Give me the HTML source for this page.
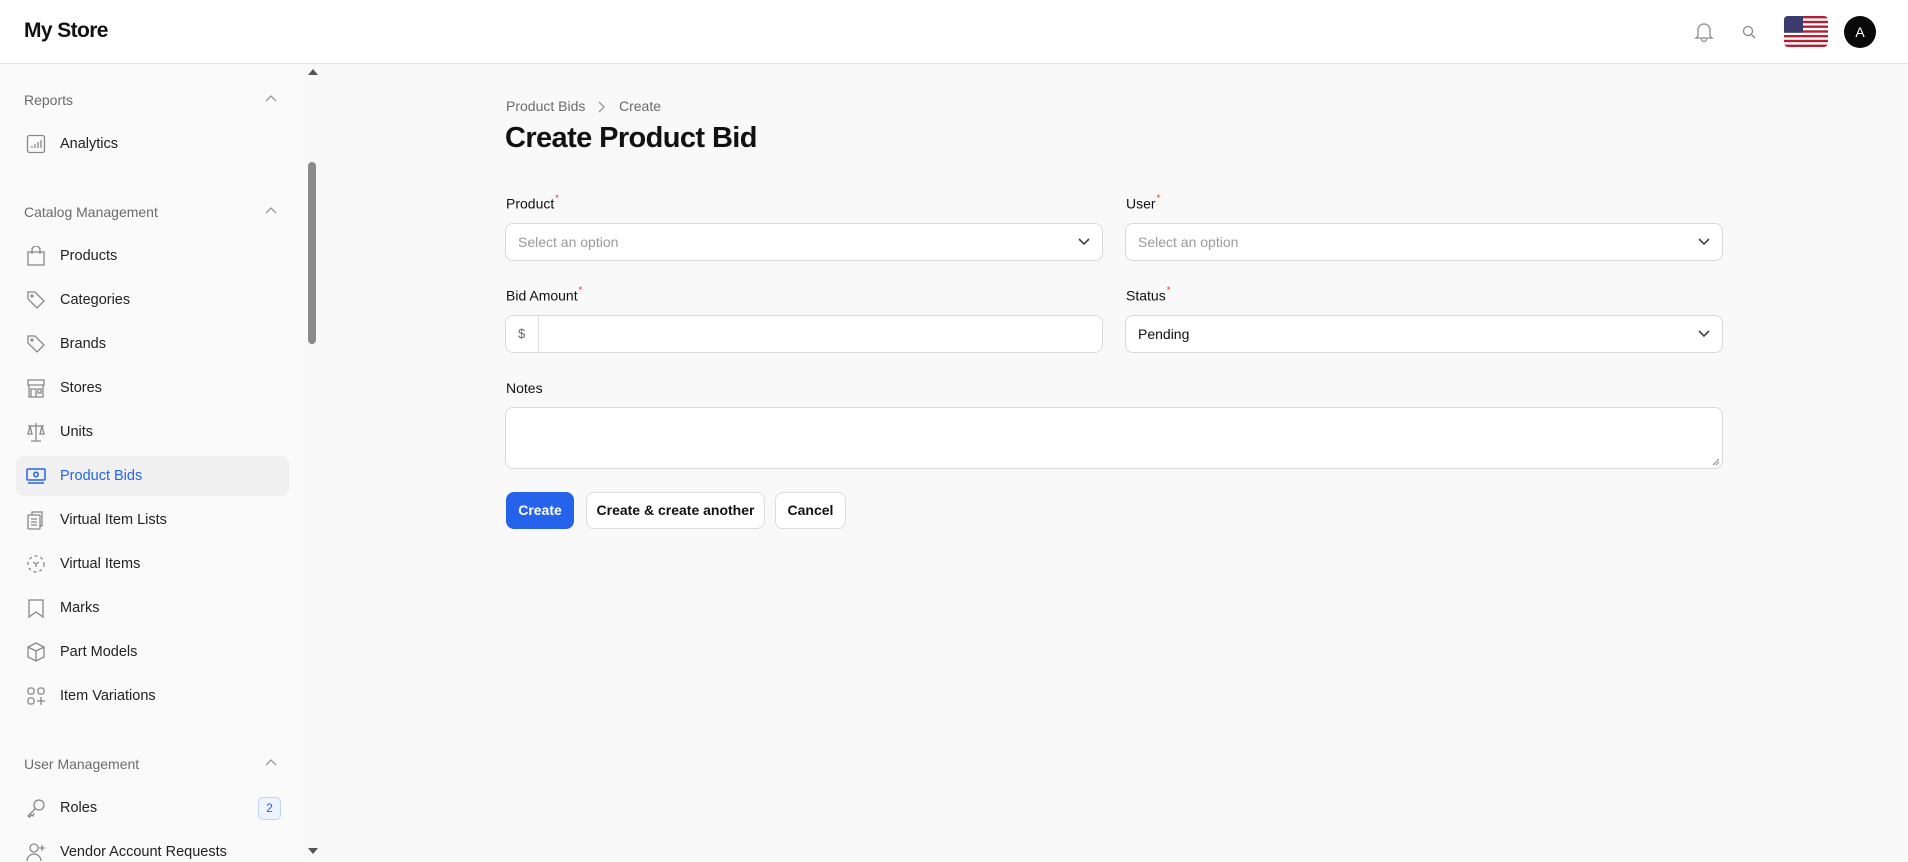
<!DOCTYPE html>
<html><head><meta charset="utf-8"><style>
*{box-sizing:border-box;margin:0;padding:0}
body{width:1908px;height:860px;overflow:hidden;background:#f9f9f9;font-family:"Liberation Sans",sans-serif;color:#111;position:relative}
.hdr{position:absolute;left:0;top:0;width:1908px;height:64px;background:#fff;border-bottom:1px solid #e5e5e5}
.logo{position:absolute;left:24px;top:19px;font-size:21px;font-weight:bold;letter-spacing:-0.6px}
.side{position:absolute;left:0;top:64px;width:305px;height:796px;background:#fafafa}
.track{position:absolute;left:305px;top:64px;width:15px;height:796px;background:#f9f9f9}
.thumb{position:absolute;left:308px;top:162px;width:8px;height:182px;background:#8a8a8a;border-radius:4px}
.grp{position:absolute;left:24px;font-size:14px;color:#6b6b6b}
.chev{position:absolute;left:264px;width:14px;height:14px}
.it{position:absolute;left:60px;font-size:14.5px;color:#222}
.ic{position:absolute;left:26px;width:20px;height:20px}
.main{position:absolute;left:506px}
.lbl{position:absolute;font-size:14px;color:#111}
.lbl sup{color:#e02424;font-size:9px;position:relative;top:-2px;margin-left:1px}
.box{position:absolute;background:#fff;border:1px solid #d9d9d9;border-radius:8px;font-size:14px}
.ph{position:absolute;left:12px;top:10px;color:#9a9a9a}
.dd{position:absolute;right:12px;top:13px}
.btn{position:absolute;top:492px;height:37px;border-radius:8px;font-size:14px;font-weight:bold;text-align:center;line-height:35px}
</style></head><body>
<div class="hdr">
<div class="logo">My Store</div>
<svg style="position:absolute;left:1694px;top:21px" width="20" height="22" viewBox="0 0 20 22" fill="none" stroke="#9a9a9a" stroke-width="1.5"><path d="M4 15V9a6 6 0 0 1 12 0v6l2 2H2z"/><path d="M7.5 18a2.5 2.5 0 0 0 5 0"/></svg>
<svg style="position:absolute;left:1742px;top:25px" width="14" height="14" viewBox="0 0 14 14" fill="none" stroke="#888" stroke-width="1.3"><circle cx="6" cy="6" r="4.5"/><path d="M9.5 9.5L13 13"/></svg>
<svg style="position:absolute;left:1784px;top:16px" width="44" height="31" viewBox="0 0 44 31"><defs><clipPath id="c"><rect width="44" height="31" rx="4"/></clipPath></defs><g clip-path="url(#c)"><rect width="44" height="31" fill="#fff"/><g fill="#b22234"><rect y="0" width="44" height="2.4"/><rect y="4.8" width="44" height="2.4"/><rect y="9.5" width="44" height="2.4"/><rect y="14.3" width="44" height="2.4"/><rect y="19" width="44" height="2.4"/><rect y="23.8" width="44" height="2.4"/><rect y="28.6" width="44" height="2.4"/></g><rect width="19" height="16.7" fill="#3c3b6e"/></g></svg>
<div style="position:absolute;left:1844px;top:16px;width:32px;height:32px;border-radius:50%;background:#0a0a0a;color:#fff;font-size:14px;text-align:center;line-height:32px">A</div>
</div>
<div class="side">
<div style="position:absolute;left:16px;top:392px;width:273px;height:40px;background:#f0f0f0;border-radius:8px"></div>
</div>
<div class="track"><svg style="position:absolute;left:3px;top:5px" width="10" height="6"><path d="M0 6L5 0L10 6z" fill="#555"/></svg><svg style="position:absolute;left:3px;top:784px" width="10" height="6"><path d="M0 0L5 6L10 0z" fill="#555"/></svg></div>
<div class="thumb"></div>

<div class="grp" style="top:92px">Reports</div>
<svg class="chev" style="top:92px" viewBox="0 0 14 14" fill="none" stroke="#999" stroke-width="1.3"><path d="M2 9l5-5 5 5"/></svg>
<svg class="ic" style="top:134px" viewBox="0 0 20 20" fill="none" stroke="#888" stroke-width="1.3"><rect x="1.5" y="1.5" width="17" height="17" rx="2"/><path d="M6 14v-2M9 14v-4M12 14v-6M15 14V6"/></svg>
<div class="it" style="top:136px">Analytics</div>

<div class="grp" style="top:204px">Catalog Management</div>
<svg class="chev" style="top:204px" viewBox="0 0 14 14" fill="none" stroke="#999" stroke-width="1.3"><path d="M2 9l5-5 5 5"/></svg>

<svg class="ic" style="top:246px" viewBox="0 0 20 20" fill="none" stroke="#888" stroke-width="1.3"><path d="M2 6h16v13H2z"/><path d="M6 8V4a4 4 0 0 1 8 0v4"/></svg>
<div class="it" style="top:248px">Products</div>
<svg class="ic" style="top:290px" viewBox="0 0 20 20" fill="none" stroke="#888" stroke-width="1.3"><path d="M2 2h7l9 9-7 7-9-9z"/><circle cx="6" cy="6" r="1"/></svg>
<div class="it" style="top:292px">Categories</div>
<svg class="ic" style="top:334px" viewBox="0 0 20 20" fill="none" stroke="#888" stroke-width="1.3"><path d="M2 2h7l9 9-7 7-9-9z"/><circle cx="6" cy="6" r="1"/></svg>
<div class="it" style="top:336px">Brands</div>
<svg class="ic" style="top:378px" viewBox="0 0 20 20" fill="none" stroke="#888" stroke-width="1.3"><path d="M2 2h16v5H2zM3 7v12h14V7M5 19v-8h5v8M12 11h3v4h-3z"/></svg>
<div class="it" style="top:380px">Stores</div>
<svg class="ic" style="top:422px" viewBox="0 0 20 20" fill="none" stroke="#888" stroke-width="1.3"><path d="M10 1v18M5 19h10M2 4h16M4 4l-2 8h4zM16 4l-2 8h4z"/></svg>
<div class="it" style="top:424px">Units</div>
<svg class="ic" style="top:466px" viewBox="0 0 20 20" fill="none" stroke="#2563eb" stroke-width="1.5"><rect x="1" y="3" width="18" height="11" rx="1"/><circle cx="10" cy="8.5" r="2.2"/><path d="M2 17h16"/></svg>
<div class="it" style="top:468px;color:#2563eb">Product Bids</div>
<svg class="ic" style="top:510px" viewBox="0 0 20 20" fill="none" stroke="#888" stroke-width="1.3"><rect x="2" y="5" width="12" height="14" rx="1"/><path d="M6 5V2h10v14h-2M5 9h6M5 12h6M5 15h6"/></svg>
<div class="it" style="top:512px">Virtual Item Lists</div>
<svg class="ic" style="top:554px" viewBox="0 0 20 20" fill="none" stroke="#888" stroke-width="1.3" stroke-dasharray="3 3"><circle cx="10" cy="10" r="8"/><path d="M7 8l3 2 3-2M10 10v3" stroke-dasharray="none"/></svg>
<div class="it" style="top:556px">Virtual Items</div>
<svg class="ic" style="top:598px" viewBox="0 0 20 20" fill="none" stroke="#888" stroke-width="1.3"><path d="M3 2h14v17l-7-5-7 5z"/></svg>
<div class="it" style="top:600px">Marks</div>
<svg class="ic" style="top:642px" viewBox="0 0 20 20" fill="none" stroke="#888" stroke-width="1.3"><path d="M10 1l8 4v10l-8 4-8-4V5zM2 5l8 4 8-4M10 9v10"/></svg>
<div class="it" style="top:644px">Part Models</div>
<svg class="ic" style="top:686px" viewBox="0 0 20 20" fill="none" stroke="#888" stroke-width="1.3"><rect x="2" y="2" width="6" height="6" rx="2"/><rect x="12" y="2" width="6" height="6" rx="2"/><rect x="2" y="12" width="6" height="6" rx="2"/><path d="M15 11v8M11 15h8"/></svg>
<div class="it" style="top:688px">Item Variations</div>

<div class="grp" style="top:756px">User Management</div>
<svg class="chev" style="top:756px" viewBox="0 0 14 14" fill="none" stroke="#999" stroke-width="1.3"><path d="M2 9l5-5 5 5"/></svg>
<svg class="ic" style="top:798px" viewBox="0 0 20 20" fill="none" stroke="#888" stroke-width="1.3"><circle cx="13" cy="7" r="5"/><path d="M9.5 10.5L2 18l2 1 1-2 2 1 1-3"/></svg>
<div class="it" style="top:800px">Roles</div>
<div style="position:absolute;left:258px;top:797px;width:23px;height:23px;border:1px solid #bfd4fb;background:#eef4ff;border-radius:5px;color:#2563eb;font-size:12px;text-align:center;line-height:21px">2</div>
<svg class="ic" style="top:842px" viewBox="0 0 20 20" fill="none" stroke="#888" stroke-width="1.3"><circle cx="8" cy="6" r="4"/><path d="M1 19a7 7 0 0 1 14 0M16 3v6M13 6h6"/></svg>
<div class="it" style="top:844px">Vendor Account Requests</div>

<div style="position:absolute;left:506px;top:98px;font-size:14px;color:#6b6b6b">Product Bids</div>
<svg style="position:absolute;left:596px;top:101px" width="10" height="12" viewBox="0 0 10 12" fill="none" stroke="#999" stroke-width="1.3"><path d="M3 1l5 5-5 5"/></svg>
<div style="position:absolute;left:619px;top:98px;font-size:14px;color:#6b6b6b">Create</div>
<div style="position:absolute;left:505px;top:122px;font-size:29px;font-weight:bold;letter-spacing:-0.6px">Create Product Bid</div>

<div class="lbl" style="left:506px;top:195px">Product<sup>*</sup></div>
<div class="lbl" style="left:1126px;top:195px">User<sup>*</sup></div>
<div class="box" style="left:505px;top:223px;width:598px;height:38px"><span class="ph">Select an option</span><svg class="dd" width="12" height="10" viewBox="0 0 12 10" fill="none" stroke="#444" stroke-width="1.6"><path d="M1 2l5 5 5-5"/></svg></div>
<div class="box" style="left:1125px;top:223px;width:598px;height:38px"><span class="ph">Select an option</span><svg class="dd" width="12" height="10" viewBox="0 0 12 10" fill="none" stroke="#444" stroke-width="1.6"><path d="M1 2l5 5 5-5"/></svg></div>

<div class="lbl" style="left:506px;top:287px">Bid Amount<sup>*</sup></div>
<div class="lbl" style="left:1126px;top:287px">Status<sup>*</sup></div>
<div class="box" style="left:505px;top:315px;width:598px;height:38px"><span style="position:absolute;left:12px;top:10px;color:#666;font-size:13px">$</span><div style="position:absolute;left:32px;top:0;width:1px;height:36px;background:#e2e2e2"></div></div>
<div class="box" style="left:1125px;top:315px;width:598px;height:38px"><span class="ph" style="color:#111">Pending</span><svg class="dd" width="12" height="10" viewBox="0 0 12 10" fill="none" stroke="#444" stroke-width="1.6"><path d="M1 2l5 5 5-5"/></svg></div>

<div class="lbl" style="left:506px;top:380px">Notes</div>
<div class="box" style="left:505px;top:407px;width:1218px;height:62px"><svg style="position:absolute;right:2px;bottom:2px" width="8" height="8" stroke="#888"><path d="M1 7L7 1M4 7L7 4"/></svg></div>

<div class="btn" style="left:506px;width:68px;background:#2563eb;color:#fff;border:1px solid #2563eb">Create</div>
<div class="btn" style="left:586px;width:179px;background:#fff;border:1px solid #dcdcdc">Create &amp; create another</div>
<div class="btn" style="left:775px;width:71px;background:#fff;border:1px solid #dcdcdc">Cancel</div>
</body></html>
